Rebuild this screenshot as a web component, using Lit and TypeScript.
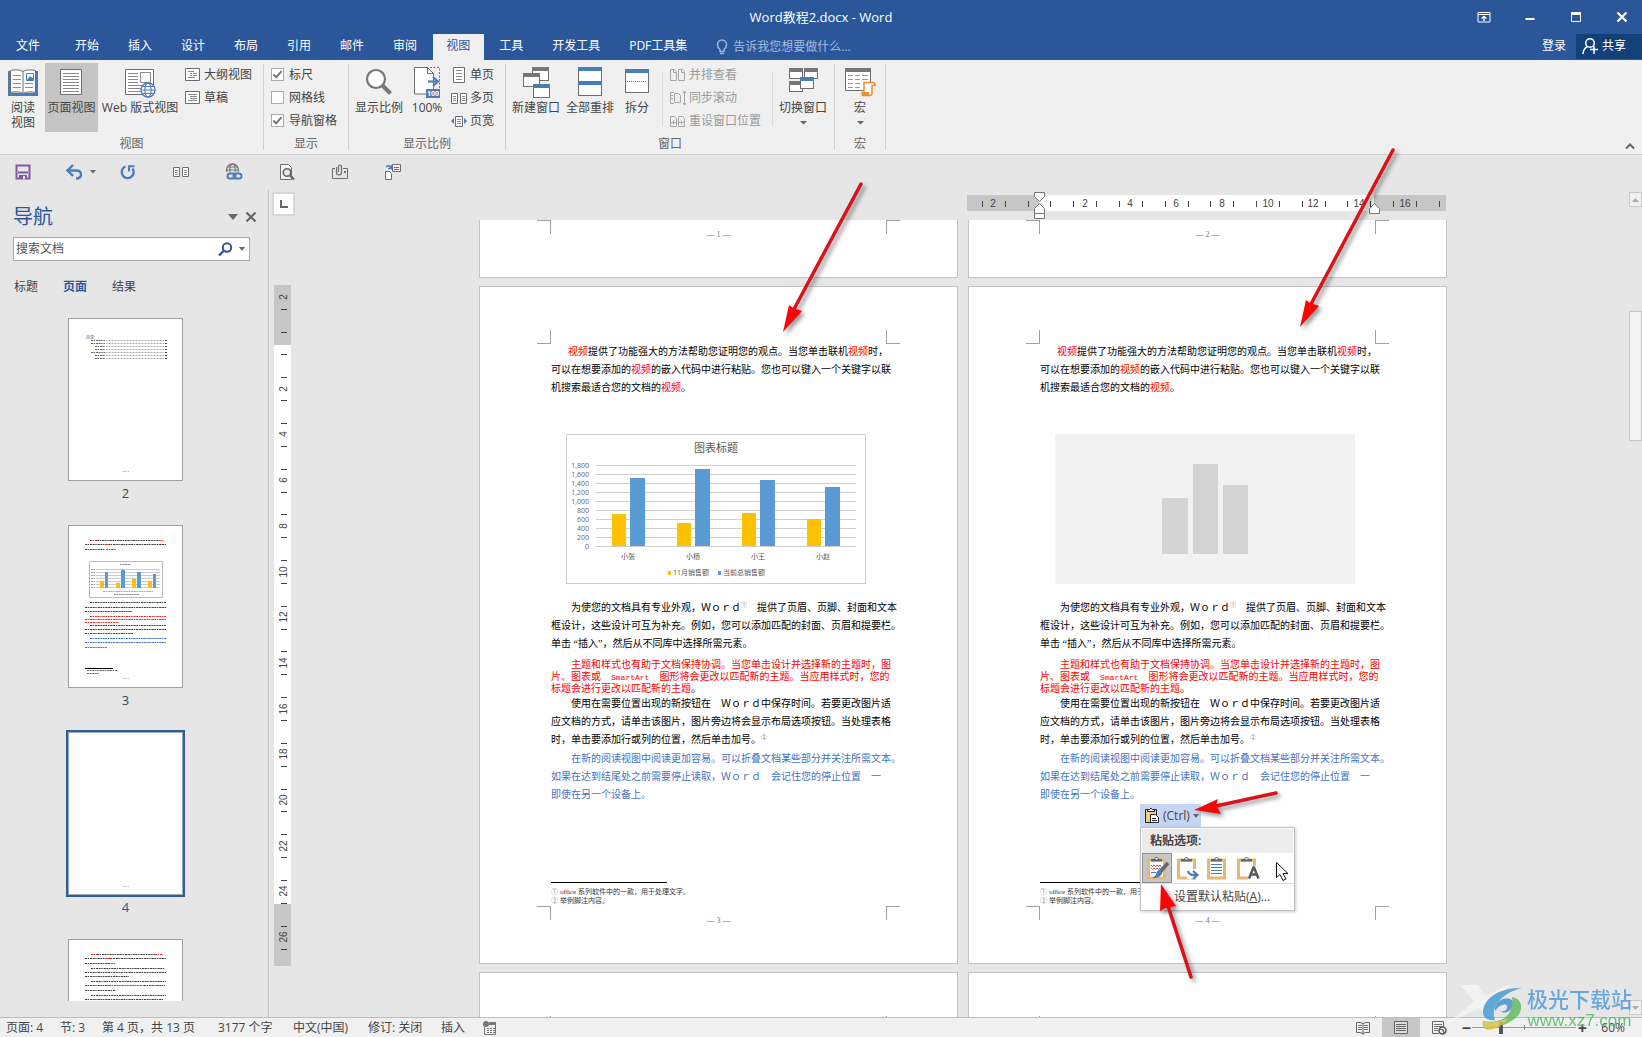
import { LitElement, html, svg, css, nothing } from "lit";
import { customElement, property } from "lit/decorators.js";
import { classMap } from "lit/directives/class-map.js";

const UI_FONT = css`"Open Sans", "Noto Sans CJK SC", sans-serif`;
const G = "#6d6d6d";
const B = "#4a7db8";

/* ---------- icons ---------- */
const icon = (w: number, h: number, body: unknown) =>
  html`<svg width=${w} height=${h} viewBox="0 0 ${w} ${h}" fill="none" aria-hidden="true">${body}</svg>`;

const rows = (x1: number, x2: number, ys: number[], c = "#8a8a8a") =>
  ys.map((y) => svg`<path d="M${x1} ${y}.5H${x2}" stroke=${c}/>`);

const globe = (cx: number, cy: number, r: number, c = B, bg = "#f0f0f0") => svg`
  <circle cx=${cx} cy=${cy} r=${r} fill=${bg} stroke=${c} stroke-width="1.3"/>
  <ellipse cx=${cx} cy=${cy} rx=${r * 0.45} ry=${r} stroke=${c} stroke-width="1.1"/>
  <path d="M${cx - r} ${cy}h${2 * r}M${cx - r * 0.85} ${cy - r * 0.5}h${1.7 * r}M${cx - r * 0.85} ${cy + r * 0.5}h${1.7 * r}" stroke=${c}/>`;

const win = (x: number, y: number, w: number, h: number, c: string) => svg`
  <rect x=${x + 0.5} y=${y + 0.5} width=${w - 1} height=${h - 1} fill="#fff" stroke=${G}/>
  <rect x=${x} y=${y} width=${w} height="4" fill=${c}/>`;

const icons = {
  read: icon(32, 32, svg`
    <path d="M1 4h3v22h11l1 1 1-1h11V4h3v25H1z" fill=${B}/>
    <path d="M3.500 3.500c4-1 10-1 12.500 1c2.500-2 8.500-2 12.500-1v22c-4-1-10-1-12.500 1c-2.500-2-8.500-2-12.500-1z" fill="#fff" stroke=${G}/>
    <path d="M16 4.500v22" stroke=${G}/>
    ${rows(6, 14, [8, 12, 16, 20])}${rows(18, 26, [16, 20])}
    <path d="M19.500 6.500h7v7h-7z" fill="#fff" stroke=${B}/><path d="M20 13l3-4 2 2 1.500-1v3z" fill=${B}/>`),
  print: icon(32, 32, svg`
    <path d="M4.500 2.500h21v25h-21z" fill="#fff" stroke=${G}/>${rows(7, 23, [6, 9, 12, 15, 18, 21, 24])}`),
  web: icon(32, 32, svg`
    <path d="M1.500 2.500h28v25h-28z" fill="#fff" stroke=${G}/>
    ${rows(4, 14, [6, 9, 12, 15])}${rows(4, 20, [18, 21, 24])}
    <path d="M16.500 5.500h10v10h-10z" stroke="#8a8a8a"/>${globe(24, 23, 7, B, "#fff")}`),
  outline: icon(16, 16, svg`
    <path d="M.5 1.500h14v12h-14z" fill="#fff" stroke=${G}/><path d="M3 4.500h6M5 6.500h2M8 6.500h4M5 8.500h2M8 8.500h4M3 10.500h7" stroke="#888"/>`),
  draft: icon(16, 16, svg`
    <path d="M.5 1.500h14v12h-14z" fill="#fff" stroke=${G}/><path d="M3 4.500h9M5 6.500h7M5 8.500h7M3 10.500h9" stroke="#888"/>`),
  zoom: icon(32, 32, svg`
    <circle cx="13" cy="12" r="9" fill="#fff" stroke="#777" stroke-width="2.200"/><path d="M19.500 18.500l8 8" stroke="#777" stroke-width="4"/>`),
  hundred: icon(32, 32, svg`
    <path d="M3.500.5h13l6 6v20.500h-19z" fill="#fff" stroke=${G}/><path d="M16.500.5v6h6" stroke=${G}/>
    <path d="M19 .5h9.500v21" stroke="#777" stroke-dasharray="2 1.500"/>
    <path d="M17 14.500h9" stroke=${B} stroke-width="2.200"/><path d="M22 10l5 4.500-5 4.500" stroke=${B} stroke-width="2.200"/>
    <rect x="15" y="22" width="14" height="9" fill=${B}/>
    <text x="22" y="29" font-size="7" font-weight="700" fill="#fff" text-anchor="middle">100</text>`),
  onePage: icon(16, 18, svg`
    <path d="M2.500 1.500h11v15h-11z" fill="#fff" stroke=${G}/>${rows(5, 11, [4, 7, 10, 13])}`),
  multi: icon(16, 18, svg`
    <path d="M.5 4.500h6v10h-6zM9.500 4.500h6v10h-6z" fill="#fff" stroke=${G}/>${rows(2, 5, [7, 9, 11])}${rows(11, 14, [7, 9, 11])}`),
  pageWidth: icon(16, 18, svg`
    <path d="M4.500 4.500h7v10h-7z" fill="#fff" stroke=${G}/>${rows(6, 10, [7, 9, 11])}<path d="M3 6v6l-3-3zM13 6v6l3-3z" fill=${B}/>`),
  newWin: icon(32, 32, svg`${win(12, 0, 17, 14, "#777")}${win(3, 6, 17, 14, "#777")}${win(13, 17, 17, 14, B)}`),
  arrange: icon(32, 32, svg`${win(4, 0, 24, 15, B)}${win(4, 14, 24, 15, B)}`),
  split: icon(32, 32, svg`${win(4, 2, 24, 24, B)}<path d="M6 14.500h20" stroke=${B} stroke-dasharray="1 1"/>`),
  side: icon(17, 16, svg`<path d="M1.500 2.500h4l2 2v9h-6zM9.500 2.500h4l2 2v9h-6z" stroke="#a6a6a6"/><path d="M4.500 2.500v3h3M12.500 2.500v3h3" stroke="#a6a6a6"/>`),
  sync: icon(17, 16, svg`<path d="M5 2.500H1.500v11H5M5.500 3.500h4l2 2v7h-6z" stroke="#a6a6a6"/><path d="M15.500 1v14M14 3l1.500-2 1.500 2M14 13l1.500 2 1.500-2" stroke="#a6a6a6"/><path d="M2 5.500h2M2 8.500h2" stroke="#a6a6a6"/>`),
  reset: icon(17, 16, svg`<path d="M1.500 3.500h4l2 2v8h-6zM9.500 3.500h4l2 2v8h-6z" stroke="#a6a6a6"/><path d="M2 9.500h5M10 9.500h5M4.500 7.500v4M12.500 7.500v4" stroke="#a6a6a6"/>`),
  switchWin: icon(32, 32, svg`${win(2, 1, 14, 11, "#777")}${win(17, 1, 14, 11, "#777")}${win(2, 14, 14, 11, "#777")}${win(13, 10, 14, 12, B)}`),
  macro: icon(32, 32, svg`
    <path d="M1.500 2.500h25v21h-25z" fill="#fff" stroke=${G}/><rect x="1" y="1" width="26" height="4" fill="#777"/>
    <path d="M4 8.500h5M11 8.500h5M18 8.500h6M4 12.500h5M11 12.500h5M18 12.500h6M4 16.500h5M11 16.500h5M4 20.500h5M11 20.500h5" stroke="#999"/>
    <path d="M20 15.500h9q2 0 2 3h-3v8q0 2-2 2h-8q2-1 2-3z" fill="#fff" stroke="#ed8b33" stroke-width="1.500"/><path d="M17 25h8v3h-7z" fill="#ed8b33"/>`),
  save: icon(18, 16, svg`<g transform="translate(2 0)"><path d="M1.500 1.500h13v13h-13z" stroke="#8456a3" stroke-width="2"/><path d="M3 8.500h10" stroke="#8456a3" stroke-width="2"/><path d="M4 11h8v4H4z" fill="#8456a3"/><path d="M8 12h2v3H8z" fill="#e6e6e6"/></g>`),
  undo: icon(18, 16, svg`<path d="M2 6.500h8q5 0 5 4t-5 4" stroke=${B} stroke-width="2.400"/><path d="M7 1L1.500 6.500 7 12" stroke=${B} stroke-width="2.400"/>`),
  redo: icon(18, 16, svg`<path d="M6.500 2.500A6 6 0 1 0 13.500 4.500" stroke=${B} stroke-width="2.400"/><path d="M10 7.500V2.200H15.500" stroke=${B} stroke-width="2"/>`),
  pages2: icon(18, 16, svg`<path d="M1.500 3.500h6v9h-6zM10.500 3.500h6v9h-6z" fill="#fff" stroke=${G}/>${rows(3, 6, [6, 8, 10])}${rows(12, 15, [6, 8, 10])}`),
  link: icon(18, 18, svg`${globe(7.500, 7, 6, "#777", "#e6e6e6")}<rect x="1" y="9" width="16" height="8" fill="#e6e6e6"/><rect x="2.500" y="10.500" width="8" height="5" rx="2.500" stroke=${B} stroke-width="2"/><rect x="8.500" y="10.500" width="8" height="5" rx="2.500" stroke=${B} stroke-width="2"/>`),
  preview: icon(18, 18, svg`<path d="M2.500 1.500h8l3 3v12h-11z" fill="#f5f5f5" stroke=${G}/><circle cx="9" cy="9.500" r="3.800" fill="#e6e6e6" stroke="#666" stroke-width="1.600"/><path d="M12 12.500l4 4" stroke="#666" stroke-width="2.400"/>`),
  attach: icon(18, 16, svg`<path d="M4 4.500H1.500v10h15v-10H12" stroke=${G}/><path d="M5.500 3v5q0 3 2.500 3t2.500-3V2.500Q10.500 1 9 1T7.500 2.500V8" stroke=${G} stroke-width="1.200"/><path d="M13 7h2v2h-2z" fill=${G}/>`),
  swap: icon(18, 18, svg`<path d="M8.500 1.500h8v7h-8z" fill="#f5f5f5" stroke=${G}/><path d="M10 4.500h5M10 6.500h5" stroke=${G}/><path d="M1.500 8.500h4l2 2v6h-6z" fill="#fff" stroke=${G}/><path d="M2 4q3-3 5 1M7.500 2v3.500H4" stroke=${B} stroke-width="1.400"/>`),
  bulb: icon(12, 16, svg`<path d="M4 10.500Q1.500 8.500 1.500 5.500a4.500 4.500 0 0 1 9 0Q10.500 8.500 8 10.500v2H4z" stroke="#9db6dd" stroke-width="1.500"/><path d="M4 14.500h4" stroke="#9db6dd" stroke-width="1.500"/>`),
  user: icon(16, 18, svg`<circle cx="8" cy="6" r="4.300" stroke="#fff" stroke-width="1.500"/><path d="M1 17q0-5 4.500-7.500M8 12.500h8M12 9v8" stroke="#fff" stroke-width="1.500"/>`),
  rib: icon(14, 12, svg`<path d="M1 1.500h12v9.500H1zM1 3.500h12" stroke="#fff"/><path d="M7 10V5.500M4.500 7.500L7 5.500l2.500 2" stroke="#fff" stroke-width="1.400"/>`),
  min: icon(12, 12, svg`<path d="M1.500 8h9" stroke="#fff" stroke-width="2"/>`),
  max: icon(12, 12, svg`<path d="M1.500 1.500h9v9h-9z" stroke="#fff"/><path d="M1 2.500h10" stroke="#fff" stroke-width="3"/>`),
  close: icon(12, 12, svg`<path d="M1.500 1.500l9 9M10.500 1.500l-9 9" stroke="#fff" stroke-width="2.200"/>`),
  caret: icon(7, 4, svg`<path d="M0 0h6L3 4z" fill="#666"/>`),
  up: icon(12, 8, svg`<path d="M2 6.500l4-4 4 4" stroke="#666" stroke-width="2"/>`),
  navCaret: icon(10, 6, svg`<path d="M0 0h10L5 6z" fill="#666"/>`),
  navClose: icon(12, 12, svg`<path d="M1.500 1.500l9 9M10.500 1.500l-9 9" stroke="#666" stroke-width="2.200"/>`),
  search: icon(15, 14, svg`<circle cx="9" cy="5.500" r="4.200" stroke="#2f5597" stroke-width="2"/><path d="M6 8.500l-5 5" stroke="#2f5597" stroke-width="2.400"/>`),
  macroRec: icon(15, 14, svg`<path d="M1.500 5v8.500h11V3" stroke="#777"/><path d="M6 1h7v3H6z" fill="#777"/><circle cx="3" cy="3" r="3" fill="#777"/><path d="M4 7.500h2M7 7.500h2M10 7.500h2M4 9.500h2M7 9.500h2M10 9.500h2M4 11.500h2M7 11.500h2M10 11.500h2" stroke="#777"/>`),
  viewRead: icon(14, 14, svg`<path d="M.5 1.500q4-.5 6.500 1 2.500-1.500 6.500-1v10q-4-.5-6.500 1-2.500-1.500-6.500-1zM7 2.500v11" stroke="#666"/><path d="M2 4.500h4M2 6.500h4M2 8.500h4M8 4.500h4M8 6.500h4M8 8.500h4" stroke="#777"/>`),
  viewPrint: icon(14, 14, svg`<path d="M.5.5h13v12H.5z" fill="#ddd" stroke="#666"/>${rows(2, 12, [3, 5, 7, 9], "#666")}`),
  viewWeb: icon(15, 14, svg`<path d="M7 12.500H.5V.5h11V6" stroke="#666"/>${rows(2, 10, [3, 5], "#777")}${rows(2, 6, [7, 9], "#777")}<circle cx="10.500" cy="9.500" r="3.500" fill="#f0f0f0" stroke="#555" stroke-width="1.500"/><path d="M8 8l3 1 1 3" stroke="#555" stroke-width="1.300"/>`),
  clip: icon(16, 17, svg`<path d="M1.500 2.500h11v13h-11z" fill="#f0d080" stroke="#222"/><path d="M3.500 4.500v-2h2q1.500-3 3 0h2v2z" fill="#fff" stroke="#222"/><path d="M6.500 7.500h5l3 3v5h-8z" fill="#fff" stroke="#222"/><path d="M8 11.500h4M8 13.500h5" stroke="#222"/>`),
};

const board = (extra: unknown) => icon(26, 24, svg`<g transform="translate(2 0)">
  <path d="M2.500 4h16v18h-16z" fill="#fff" stroke="#e6b877" stroke-width="3"/>
  <path d="M5 5.500V3h3q2.500-4 5 0h3v2.500z" fill="#666"/><rect x="9.500" y="2" width="2" height="1.500" fill="#fff"/>${extra}</g>`);

const pasteIcons = [
  board(svg`<path d="M5 9l1.500 1.500L8 9l1.500 1.500L11 9l1.500 1.500L14 9l1.500 1.500M5 12l1.500 1.500L8 12l1.500 1.500L11 12l1.500 1.500L14 12" stroke="#d0444c"/><path d="M5 16.500h5" stroke=${B}/><path d="M22 7l-8 9" stroke="#666" stroke-width="3.500"/><path d="M14 14l2.500 3q-3 6-10.500 5q4-2 4-4 1-4 4-4z" fill=${B}/>`),
  board(svg`<path d="M11 13h11v10H11z" fill="#fff"/><path d="M12 15q1 5 9 4M17 15l4.500 4-4.500 4" stroke=${B} stroke-width="2.200"/>`),
  board(rows(5, 16, [8, 11, 14, 17], B)),
  board(svg`<path d="M12 10h10v14H12z" fill="#fff"/><path d="M13 22.500l4.500-11h.5l4.500 11M14.500 18.500h6.500" stroke="#555" stroke-width="2.400"/>`),
];

/* ---------- data ---------- */
const TABS = ["文件", "开始", "插入", "设计", "布局", "引用", "邮件", "审阅", "视图", "工具", "开发工具", "PDF工具集"];

const CHART = [
  { name: "小张", a: 700, b: 1500 },
  { name: "小杨", a: 500, b: 1700 },
  { name: "小王", a: 740, b: 1460 },
  { name: "小赵", a: 600, b: 1300 },
];
const AXIS = ["1,800", "1,600", "1,400", "1,200", "1,000", "800", "600", "400", "200", "0"];

const CELL = 45.7;

/* ---------- rulers ---------- */
@customElement("h-ruler")
class HRuler extends LitElement {
  static styles = css`
    :host { display: block; height: 30px; }
    svg { display: block; overflow: visible; font: 10px "Liberation Sans", sans-serif; }
  `;
  render() {
    const x0 = 71;
    const labels = [-1, 1, 2, 3, 4, 5, 6, 7, 8];
    const ticks = Array.from({ length: 21 }, (_, i) => Math.round(x0 + CELL * (i / 2 - 1.25))).filter((x) => x < 476);
    return html`<svg width="479" height="30" role="img" aria-label="水平标尺">
      <rect x="-1" y="5" width="479" height="16" fill="#c6c6c6"/>
      <rect x="71" y="5" width="335" height="16" fill="#fff"/>
      ${ticks.map((x) => svg`<path d="M${x}.5 11v6" stroke="#444"/>`)}
      ${labels.map((n) => svg`<text x=${Math.round(x0 + n * CELL)} y="17" fill="#444" text-anchor="middle">${Math.abs(n * 2)}</text>`)}
      <g fill="#fff" stroke="#777">
        <path d="M66.500 2.500h10v4l-5 5-5-5zM66.500 23.500v-5l5-5 5 5v5zM66.500 23.500h10v5h-10z"/>
        <path d="M401.500 23.500v-5l5-5 5 5v5z"/>
      </g>
    </svg>`;
  }
}

@customElement("v-ruler")
class VRuler extends LitElement {
  static styles = css`
    :host { display: flex; flex-direction: column; align-items: flex-start; width: 31px; flex: none; padding: 2px 0 0 3px; box-sizing: border-box; overflow: hidden; }
    .tabstop { width: 23px; height: 24px; box-sizing: border-box; border: 2px solid #d8d8d8; background: #fff; padding: 0; display: grid; place-items: center; }
    svg { display: block; font: 10px "Liberation Sans", sans-serif; }
    .scale { margin: 69px 0 0 2px; }
  `;
  render() {
    const y0 = 58;
    const ticks = Array.from({ length: 30 }, (_, i) => Math.round(y0 + CELL * (i / 2 - 0.75))).filter((y) => y > 20 && y < 668);
    return html`
      <button class="tabstop" aria-label="制表位">${icon(8, 8, svg`<path d="M1 0v7H8" stroke="#666" stroke-width="2"/>`)}</button>
      <svg class="scale" width="17" height="681" role="img" aria-label="垂直标尺">
        <rect width="17" height="681" fill="#c6c6c6"/>
        <rect y="60" width="17" height="559" fill="#fff"/>
        ${ticks.map((y) => svg`<path d="M7 ${y}.5h6" stroke="#444"/>`)}
        ${[-1, 1, 2, 3, 4, 5, 6, 7, 8, 9, 10, 11, 12, 13].map((n) => {
          const y = Math.round(y0 + n * CELL);
          return svg`<text x="13" y=${y} transform="rotate(-90 13 ${y})" fill="#444" text-anchor="middle">${Math.abs(n * 2)}</text>`;
        })}
      </svg>`;
  }
}

/* ---------- chart ---------- */
@customElement("sales-chart")
class SalesChart extends LitElement {
  @property({ type: Boolean }) placeholder = false;
  static styles = css`
    :host { display: block; }
    svg { display: block; font: 7px "Open Sans", "Noto Sans CJK SC", sans-serif; }
  `;
  render() {
    if (this.placeholder) {
      return html`<svg width="300" height="150" role="img" aria-label="图表">
        <rect width="300" height="150" fill="#f2f2f2"/>
        <path d="M107 64h26v56h-26zM138 30h25v90h-25zM168 51h25v69h-25z" fill="#d4d4d4"/>
      </svg>`;
    }
    const h = (v: number) => Math.round(v * 0.045);
    return html`<svg width="300" height="150" role="img" aria-label="图表标题">
      <rect x=".5" y=".5" width="299" height="149" fill="#fff" stroke="#d0d0d0"/>
      <text x="150" y="18" font-size="11" fill="#595959" text-anchor="middle">图表标题</text>
      ${AXIS.map((t, i) => svg`<path d="M30 ${31 + i * 9}.5h260" stroke="#d0d0d0"/>
        <text x="23" y=${34 + i * 9} fill="#666" text-anchor="end">${t}</text>`)}
      ${CHART.map((d, i) => svg`
        <rect x=${46 + i * 65} y=${112 - h(d.a)} width="14" height=${h(d.a)} fill="#ffc000"/>
        <rect x=${64 + i * 65} y=${112 - h(d.b)} width="15" height=${h(d.b)} fill="#5b9bd5"/>
        <text x=${62 + i * 65} y="125" fill="#555" text-anchor="middle">${d.name}</text>`)}
      <rect x="102" y="137" width="3" height="4" fill="#ffc000"/><text x="107" y="141" fill="#555">11月销售额</text>
      <rect x="152" y="137" width="3" height="4" fill="#5b9bd5"/><text x="157" y="141" fill="#555">当前总销售额</text>
    </svg>`;
  }
}

/* ---------- paper ---------- */
@customElement("doc-sheet")
class DocSheet extends LitElement {
  @property() extent: "full" | "head" | "foot" = "full";
  @property() no = "";
  @property({ type: Boolean }) placeholder = false;
  static styles = css`
    :host { display: flex; flex-direction: column; background: #fff; border: 1px solid #c3c3c3; box-sizing: border-box; position: relative; }
    :host([extent="foot"]) { border-top: 0; }
    :host([extent="head"]) { border-bottom: 0; }
    .edge { display: grid; grid-template-columns: 71px 1fr 71px; height: 57px; flex: none; }
    .mark { width: 13px; height: 13px; border: 0 solid #a0a0a0; }
    .tl { align-self: end; justify-self: end; border-width: 0 1px 1px 0; }
    .tr { align-self: end; justify-self: start; border-width: 0 0 1px 1px; grid-column: 3; }
    .bl { justify-self: end; border-width: 1px 1px 0 0; }
    .br { justify-self: start; border-width: 1px 0 0 1px; }
    .no { padding-top: 8px; text-align: center; font: 8px/14px "Liberation Serif", serif; color: #777; }
    .body { flex: 1; display: flex; flex-direction: column; margin-top: -2px; padding: 0 71px; font: 10px/18px "Noto Sans CJK SC", sans-serif; color: #000; white-space: nowrap; }
    p { margin: 0; text-indent: 2em; }
    .first { text-indent: 17px; }
    .tight { line-height: 12px; margin-top: 6px; color: #f00; }
    .blue { color: #4472c4; margin-top: 1px; }
    .red { color: #f00; }
    .dark { color: #000; }
    .chart { margin: 38px 0 14px 15px; }
    .mono { font-family: "Liberation Mono", monospace; font-size: 8px; line-height: 0; }
    .fw { font-family: "Liberation Serif", "Noto Sans CJK SC", serif; line-height: 0; }
    sup { font-size: 6px; line-height: 0; vertical-align: 4px; color: #777; }
    .notes { margin-top: auto; width: max-content; font: 7px/9px "Liberation Serif", "Noto Sans CJK SC", serif; color: #333; }
    .rule { width: 116px; border-top: 1px solid #000; margin-bottom: 5px; }
    .notes div span { color: #888; padding-right: 2px; }
  `;
  render() {
    return html`
      ${this.extent === "foot" ? nothing : html`<div class="edge"><i class="mark tl"></i><i class="mark tr"></i></div>`}
      ${this.extent !== "full" ? nothing : html`<div class="body">
        <p class="first"><span class="red">视频</span>提供了功能强大的方法帮助您证明您的观点。当您单击联机<span class="red">视频</span>时，<br>可以在想要添加的<span class="red">视频</span>的嵌入代码中进行粘贴。您也可以键入一个关键字以联<br>机搜索最适合您的文档的<span class="red">视频</span>。</p>
        <sales-chart class="chart" ?placeholder=${this.placeholder}></sales-chart>
        <p>为使您的文档具有专业外观，<span class="fw">Ｗｏｒｄ</span><sup>①</sup>　提供了页眉、页脚、封面和文本<br>框设计，这些设计可互为补充。例如，您可以添加匹配的封面、页眉和提要栏。<br>单击<span class="fw"> “</span>插入<span class="fw">”</span>，然后从不同库中选择所需元素。</p>
        <p class="tight">主题和样式也有助于文档保持协调。当您单击设计并选择新的主题时，图<br>片、图表或　<span class="mono">SmartArt</span>　图形将会更改以匹配新的主题。当应用样式时，您的<br>标题会进行更改以匹配新的主题<span class="dark">。</span></p>
        <p>使用在需要位置出现的新按钮在　<span class="fw">Ｗｏｒｄ</span>中保存时间。若要更改图片适<br>应文档的方式，请单击该图片，图片旁边将会显示布局选项按钮。当处理表格<br>时，单击要添加行或列的位置，然后单击加号。<sup>②</sup></p>
        <p class="blue">在新的阅读视图中阅读更加容易。可以折叠文档某些部分并关注所需文本。<br>如果在达到结尾处之前需要停止读取，<span class="fw">Ｗｏｒｄ</span>　会记住您的停止位置　一<br>即使在另一个设备上。</p>
        <div class="notes"><div class="rule"></div><div><span>①</span>office 系列软件中的一款，用于处理文字。</div><div><span>②</span>举例脚注内容。</div></div>
      </div>`}
      ${this.extent === "head" ? nothing : html`<div class="edge"><i class="mark bl"></i><div class="no">— ${this.no} —</div><i class="mark br"></i></div>`}
      <slot></slot>`;
  }
}

/* ---------- paste options ---------- */
@customElement("paste-menu")
class PasteMenu extends LitElement {
  static styles = css`
    :host { display: block; width: 155px; font: 12px/16px ${UI_FONT}; color: #444; }
    button { font: inherit; color: inherit; border: 0; padding: 0; background: none; }
    .trigger { display: flex; align-items: center; gap: 3px; width: 61px; height: 23px; padding-left: 4px; background: #c5d5f3; }
    .menu { background: #fff; border: 1px solid #c0c0c0; box-shadow: 1px 1px 3px #0003; }
    .head { margin: 1px 1px 0; padding: 4px 8px; background: #ececec; font-weight: 600; }
    .opts { display: flex; padding-left: 1px; border-bottom: 1px solid #ddd; }
    .opts button { width: 30px; height: 30px; display: grid; place-items: center; box-sizing: border-box; }
    .opts .on { background: #c6c6c6; border: 1px solid #8f8f8f; }
    .default { display: block; padding: 5px 0 5px 33px; white-space: nowrap; }
  `;
  render() {
    return html`
      <button class="trigger">${icons.clip}<span>(Ctrl)</span>${icons.caret}</button>
      <div class="menu">
        <div class="head">粘贴选项:</div>
        <div class="opts">${pasteIcons.map((p, i) => html`<button class=${classMap({ on: i === 0 })} aria-label=${["保留源格式", "合并格式", "使用目标主题", "只保留文本"][i]}>${p}</button>`)}</div>
        <button class="default">设置默认粘贴(<u>A</u>)...</button>
      </div>`;
  }
}

/* ---------- navigation pane ---------- */
const dash = (x: number, x2: number, y: number, c = "#444") =>
  svg`<path d="M${x} ${y}.5H${x2}" stroke=${c} stroke-dasharray="2 .6 1.400 .8 2.400 .5"/>`;
const RED = "#e83030";

const thumbs: Record<string, unknown> = {
  "2": svg`<text x="17" y="20" font-size="4" fill="#2b579a">目录</text>
    ${[0, 1, 2, 3, 4, 5, 6].map((i) => svg`${dash([22, 22, 26, 26, 22, 26, 26][i], 36, 21 + i * 3, "#666")}<path d="M37 ${21 + i * 3}.5H95" stroke="#aaa" stroke-dasharray="1 .5"/>${dash(96, 98, 21 + i * 3)}`)}
    ${dash(54, 60, 152, "#bbb")}`,
  "3": svg`${dash(21, 28, 14, RED)}${dash(28, 90, 14)}${dash(90, 95, 14, RED)}${dash(16, 97, 18)}${dash(36, 40, 18, RED)}${dash(16, 36, 23)}${dash(37, 47, 23, RED)}
    <path d="M20.500 35.500h73v36h-73z" stroke="#bbb"/>${dash(51, 62, 38, "#888")}
    ${[43, 46, 49, 52, 55, 58, 61].map((y) => svg`<path d="M27 ${y}.5h64" stroke="#ccc"/>${dash(22, 26, y, "#999")}`)}
    <path d="M31 55h4v7h-4zM47 57h4v5h-4zM63 53h4v9h-4zM79 55h4v7h-4z" fill="#ffc000"/>
    <path d="M36 46h3v16h-3zM52 44h4v18h-4zM68 46h4v16h-4zM84 48h3v14h-3z" fill="#5b9bd5"/>
    ${dash(34, 84, 65, "#aaa")}${dash(45, 70, 68, "#888")}
    ${dash(21, 97, 76)}${dash(16, 98, 81)}${dash(16, 63, 85)}
    ${dash(21, 97, 90, RED)}${dash(16, 97, 93, RED)}${dash(16, 50, 96, RED)}
    ${dash(21, 97, 99)}${dash(16, 97, 103)}${dash(16, 64, 107)}
    ${dash(21, 98, 112, "#4472c4")}${dash(16, 97, 116, "#4472c4")}${dash(16, 38, 121, "#4472c4")}
    <path d="M16 142.500h28" stroke="#000"/>${dash(18, 49, 144, "#666")}${dash(18, 30, 147, "#666")}${dash(54, 60, 152, "#bbb")}`,
  "4": dash(54, 60, 153, "#bbb"),
  "5": svg`${dash(22, 28, 14, RED)}${dash(28, 86, 14)}${dash(86, 94, 14, RED)}${dash(16, 97, 18)}${dash(36, 42, 18, RED)}${dash(16, 42, 23)}${dash(42, 47, 23, RED)}
    ${dash(22, 96, 28)}${dash(16, 97, 32)}${dash(16, 60, 36)}${dash(22, 97, 41)}${dash(16, 40, 45)}${dash(40, 75, 45, RED)}${dash(75, 96, 45)}${dash(16, 47, 50)}${dash(22, 97, 55)}${dash(16, 94, 59)}`,
};

@customElement("nav-pane")
class NavPane extends LitElement {
  static styles = css`
    :host { display: flex; flex-direction: column; width: 269px; flex: none; box-sizing: border-box; padding: 13px 0 16px 13px; border-right: 1px solid #c0c0c0; font: 12px/20px ${UI_FONT}; color: #444; }
    button, input { font: inherit; color: inherit; border: 0; padding: 0; background: none; }
    header { display: flex; align-items: center; height: 27px; gap: 7px; padding-right: 11px; }
    h2 { margin: 0; flex: 1; font-size: 20px; line-height: 28px; font-weight: 400; color: #2b579a; }
    svg { display: block; }
    .search { display: flex; align-items: center; gap: 6px; margin: 7px 18px 0 0; height: 22px; padding: 0 3px 0 2px; background: #fff; border: 1px solid #ababab; }
    .search input { flex: 1; min-width: 0; outline: 0; }
    .search input::placeholder { color: #555; opacity: 1; }
    nav { display: flex; gap: 25px; margin: 16px 0 19px 1px; }
    .on { font-weight: 700; color: #2b579a; }
    .list { flex: 1; min-height: 0; overflow: hidden; display: flex; flex-direction: column; align-items: center; padding: 2px 30px 0 0; }
    .thumb { flex: none; display: flex; flex-direction: column; align-items: center; height: 207px; font-size: 13px; }
    .paper { width: 113px; height: 161px; background: #fff; border: 1px solid #a0a0a0; margin-bottom: 2px; }
    .sel .paper { border-color: #9ab; box-shadow: 0 0 0 2px #2f5f94; }
    .sel { color: #2b579a; }
  `;
  render() {
    return html`
      <header><h2>导航</h2><button aria-label="任务窗格选项">${icons.navCaret}</button><button aria-label="关闭">${icons.navClose}</button></header>
      <div class="search"><input type="text" placeholder="搜索文档" aria-label="搜索文档"><button aria-label="搜索">${icons.search}</button><button aria-label="搜索选项">${icons.caret}</button></div>
      <nav><button>标题</button><button class="on">页面</button><button>结果</button></nav>
      <div class="list">${["2", "3", "4", "5"].map((n) => html`
        <button class=${classMap({ thumb: true, sel: n === "4" })} aria-label="第 ${n} 页">
          <div class="paper"><svg width="113" height="161" fill="none">${thumbs[n]}</svg></div>${n === "5" ? nothing : n}
        </button>`)}</div>`;
  }
}

/* ---------- ribbon ---------- */
@customElement("ribbon-bar")
class RibbonBar extends LitElement {
  static styles = css`
    :host { display: flex; height: 94px; background: #f0f0f0; border-bottom: 1px solid #d0d0d0; font: 12px/15px ${UI_FONT}; color: #444; }
    button { font: inherit; color: inherit; border: 0; padding: 0; background: none; white-space: nowrap; }
    svg { display: block; }
    .group { display: flex; flex-direction: column; border-right: 1px solid #cfcfcf; margin: 4px 0; height: 86px; }
    .row { display: flex; height: 71px; margin-top: -1px; }
    .label { text-align: center; line-height: 18px; margin-top: 3px; color: #666; }
    .big { width: 54px; height: 69px; padding-top: 4px; display: flex; flex-direction: column; align-items: center; justify-content: flex-start; gap: 1px; }
    .w40 { width: 40px; } .w42 { width: 42px; } .w50 { width: 50px; } .w53 { width: 53px; } .w84 { width: 84px; }
    .w45 { width: 45px; padding-left: 1px; }
    .on { background: #c5c5c5; }
    .col { display: flex; flex-direction: column; }
    .small { display: flex; align-items: center; gap: 3px; height: 23px; }
    .off { color: #9a9a9a; }
    .drop { padding-top: 6px; display: grid; justify-items: center; }
    .vsep { width: 1px; margin: 9px 0 6px; background: #dcdcdc; }
    .g1 .row { padding-right: 11px; } .g1 .col { margin-left: 3px; }
    .g2 .row { padding: 0 11px 0 7px; } .g2 .small { gap: 5px; }
    .g3 .row { padding: 0 11px 0 3px; } .g3 .col { margin-left: 3px; }
    .g4 .row { padding: 0 4px 0 3px; } .g4 .col { margin: 0 11px 0 6px; } .g4 .vsep:first-of-type { margin-left: 5px; } .g4 .vsep + .big { margin-left: 3px; }
    input { appearance: none; width: 13px; height: 13px; margin: 0; border: 1px solid #ababab; background: #fff; display: grid; place-items: center; }
    input:checked::after { content: ""; width: 3px; height: 7px; border: solid #777; border-width: 0 2px 2px 0; transform: translateY(-1px) rotate(42deg); }
    .fold { margin: auto 6px 4px auto; }
  `;
  private big(ic: unknown, text: unknown, cls = "", drop = false) {
    return html`<button class="big ${cls}">${ic}<span>${text}${drop ? html`<span class="drop">${icon(7, 4, svg`<path d="M0 0h7L3.500 3.500z" fill="#666"/>`)}</span>` : nothing}</span></button>`;
  }
  private small(ic: unknown, text: string, off = false) {
    return html`<button class="small ${off ? "off" : ""}" ?disabled=${off}>${ic}<span>${text}</span></button>`;
  }
  private check(text: string, on: boolean) {
    return html`<label class="small"><input type="checkbox" ?checked=${on}>${text}</label>`;
  }
  render() {
    return html`
      <div class="group g1"><div class="row">
        ${this.big(icons.read, html`阅读<br>视图`, "w45")}${this.big(icons.print, "页面视图", "w53 on")}${this.big(icons.web, "Web 版式视图", "w84")}
        <div class="col">${this.small(icons.outline, "大纲视图")}${this.small(icons.draft, "草稿")}</div>
      </div><div class="label">视图</div></div>
      <div class="group g2"><div class="row"><div class="col">${this.check("标尺", true)}${this.check("网格线", false)}${this.check("导航窗格", true)}</div></div><div class="label">显示</div></div>
      <div class="group g3"><div class="row">
        ${this.big(icons.zoom, "显示比例")}${this.big(icons.hundred, "100%", "w42")}
        <div class="col">${this.small(icons.onePage, "单页")}${this.small(icons.multi, "多页")}${this.small(icons.pageWidth, "页宽")}</div>
      </div><div class="label">显示比例</div></div>
      <div class="group g4"><div class="row">
        ${this.big(icons.newWin, "新建窗口")}${this.big(icons.arrange, "全部重排")}${this.big(icons.split, "拆分", "w40")}
        <div class="vsep"></div>
        <div class="col">${this.small(icons.side, "并排查看", true)}${this.small(icons.sync, "同步滚动", true)}${this.small(icons.reset, "重设窗口位置", true)}</div>
        <div class="vsep"></div>
        ${this.big(icons.switchWin, "切换窗口", "", true)}
      </div><div class="label">窗口</div></div>
      <div class="group g5"><div class="row">${this.big(icons.macro, "宏", "w50", true)}</div><div class="label">宏</div></div>
      <button class="fold" aria-label="折叠功能区">${icons.up}</button>`;
  }
}

/* ---------- status bar ---------- */
@customElement("status-bar")
class StatusBar extends LitElement {
  static styles = css`
    :host { display: flex; align-items: center; height: 19px; flex: none; border-top: 1px solid #bdbdbd; background: #f0f0f0; font: 12px/18px ${UI_FONT}; color: #444; padding-left: 6px; }
    button { font: inherit; color: inherit; border: 0; padding: 0; background: none; white-space: nowrap; text-align: left; }
    svg { display: block; }
    .info { display: grid; grid-template-columns: 54px 42px 116px 75px 75px 73px 42px auto; justify-content: start; flex: 1; align-items: center; }
    .view { width: 38px; height: 19px; display: grid; place-items: center; }
    .on { background: #c6c6c6; }
    .zoom { display: flex; align-items: center; margin: 0 17px 0 2px; }
    .sign { width: 12px; text-align: center; font-weight: 700; font-size: 16px; }
    input { appearance: none; width: 104px; height: 13px; margin: 0; background: linear-gradient(#888, #888) 50% 50% / 1px 5px no-repeat, linear-gradient(#999, #999) 0 50% / 100% 1px no-repeat; }
    input::-webkit-slider-thumb { appearance: none; width: 4px; height: 12px; background: #555; }
    .pct { margin-left: 13px; }
  `;
  render() {
    return html`
      <div class="info">${["页面: 4", "节: 3", "第 4 页，共 13 页", "3177 个字", "中文(中国)", "修订: 关闭", "插入"].map((t) => html`<button>${t}</button>`)}<button aria-label="录制宏">${icons.macroRec}</button></div>
      <button class="view" aria-label="阅读视图">${icons.viewRead}</button><button class="view on" aria-label="页面视图">${icons.viewPrint}</button><button class="view" aria-label="Web 版式视图">${icons.viewWeb}</button>
      <div class="zoom"><button class="sign" aria-label="缩小">−</button><input type="range" min="0" max="100" value="27" aria-label="显示比例"><button class="sign" aria-label="放大">+</button><button class="pct">60%</button></div>`;
  }
}

const arrow = (d: string, x: number, y: number, x2: number, y2: number) =>
  svg`<path d="M${x} ${y}L${x2} ${y2}" stroke="#d9131a" stroke-width="3.500" stroke-linecap="round"/><path d=${d} fill="#f80606"/>`;

@customElement("app-root")
class AppRoot extends LitElement {
  static styles = css`
    :host { display: flex; flex-direction: column; height: 100vh; position: relative; overflow: hidden; background: #e6e6e6; font: 12px/16px ${UI_FONT}; color: #444; }
    button { font: inherit; color: inherit; border: 0; padding: 0; background: none; white-space: nowrap; }
    svg { display: block; }
    .title { display: grid; grid-template-columns: 1fr auto 1fr; align-items: center; height: 34px; background: #2b579a; color: #fff; font-size: 13px; }
    .title span { grid-column: 2; }
    .win { display: flex; justify-content: flex-end; gap: 6px; }
    .win button { width: 40px; height: 32px; display: grid; place-items: center; }
    .tabs { display: flex; align-items: stretch; height: 26px; gap: 2px; background: #2b579a; color: #fff; }
    .tab { padding: 0 14px 2px 13px; }
    .tab:first-child { padding: 0 20px 2px 16px; }
    .active { background: #f0f0f0; color: #2b579a; }
    .tell { display: flex; align-items: center; gap: 5px; color: #a4bbe0; padding-left: 13px; flex: 1; }
    .share { display: flex; align-items: center; gap: 4px; width: 66px; padding: 0 0 2px 6px; margin-bottom: 1px; background: #124078; box-sizing: border-box; }
    .login { padding: 0 8px 2px 0; }
    .quick { display: flex; align-items: center; height: 33px; padding: 0 0 2px 13px; gap: 35px; }
    .quick button { width: 18px; display: grid; place-items: center; }
    .undo { display: flex; align-items: center; gap: 5px; width: 18px; }
    .quick .undo button { flex: none; }
    .quick .undo button:last-child { width: 7px; }
    main { flex: 1; min-height: 0; display: flex; }
    .canvas { flex: 1; min-width: 0; display: grid; grid-template-columns: 479px 479px; column-gap: 10px; row-gap: 8px; justify-content: center; grid-template-rows: 22px 58px 678px 1fr; overflow: hidden; }
    h-ruler { grid-column: 2; }
    .float { position: absolute; left: 171px; top: 517px; }
    .scroll { width: 16px; display: flex; flex-direction: column; align-items: flex-end; padding: 2px 0; box-sizing: border-box; }
    .scroll button { width: 13px; height: 15px; border: 1px solid #c8c8c8; box-sizing: border-box; display: grid; place-items: center; background: #f0f0f0; flex: none; }
    .track { flex: 1; padding-top: 104px; }
    .bar { width: 13px; height: 130px; box-sizing: border-box; background: #f3f3f3; border: 1px solid #c8c8c8; }
    .overlay { position: absolute; left: 0; top: 0; pointer-events: none; overflow: visible; }
    .shadow { filter: drop-shadow(3px 3px 2px #0006); }
    .brand { position: absolute; right: 10px; bottom: 4px; display: flex; align-items: center; gap: 3px; opacity: .8; pointer-events: none; }
    .words { display: flex; flex-direction: column; align-items: center; }
    .cn { font-size: 21px; line-height: 25px; font-weight: 500; color: #4b97db; }
    .url { font: 17px/18px "Liberation Sans", sans-serif; color: #43b95b; }
  `;
  render() {
    const quick = [icons.redo, icons.pages2, icons.link, icons.preview, icons.attach, icons.swap];
    const names = ["重复", "多页", "超链接", "打印预览", "附件", "切换"];
    return html`
      <div class="title"><span>Word教程2.docx - Word</span>
        <div class="win"><button aria-label="功能区显示选项">${icons.rib}</button><button aria-label="最小化">${icons.min}</button><button aria-label="最大化">${icons.max}</button><button aria-label="关闭">${icons.close}</button></div>
      </div>
      <div class="tabs">
        ${TABS.map((t) => html`<button class=${classMap({ tab: true, active: t === "视图" })}>${t}</button>`)}
        <button class="tell">${icons.bulb}<span>告诉我您想要做什么...</span></button>
        <button class="login">登录</button><button class="share">${icons.user}<span>共享</span></button>
      </div>
      <ribbon-bar></ribbon-bar>
      <div class="quick">
        <button aria-label="保存">${icons.save}</button>
        <div class="undo"><button aria-label="撤消">${icons.undo}</button><button aria-label="撤消选项">${icon(6, 4, svg`<path d="M0 0h6L3 3.500z" fill="#666"/>`)}</button></div>
        ${quick.map((q, i) => html`<button aria-label=${names[i]}>${q}</button>`)}
      </div>
      <main>
        <nav-pane></nav-pane>
        <v-ruler></v-ruler>
        <div class="canvas">
          <h-ruler></h-ruler>
          <doc-sheet extent="foot" no="1"></doc-sheet><doc-sheet extent="foot" no="2"></doc-sheet>
          <doc-sheet extent="full" no="3"></doc-sheet>
          <doc-sheet extent="full" no="4" placeholder><paste-menu class="float"></paste-menu></doc-sheet>
          <doc-sheet extent="head"></doc-sheet><doc-sheet extent="head"></doc-sheet>
        </div>
        <div class="scroll"><button aria-label="向上">${icon(7, 4, svg`<path d="M0 4h7L3.500 0z" fill="#aaa"/>`)}</button><div class="track"><div class="bar"></div></div><button aria-label="向下">${icon(7, 4, svg`<path d="M0 0h7L3.500 4z" fill="#aaa"/>`)}</button></div>
      </main>
      <status-bar></status-bar>
      <svg class="overlay" width="10" height="10" fill="none" aria-hidden="true">
        <g class="shadow">
          ${arrow("M783 332l6-27 4 3 9 3z", 861, 184, 793, 311)}
          ${arrow("M1300 327l6-27 4 3 9 3z", 1393, 150, 1310, 306)}
          ${arrow("M1194 810l24-11-2 6 5 9z", 1276, 793, 1216, 806)}
          ${arrow("M1161 884l-1 27 6-3 10-2z", 1191, 977, 1168, 906)}
        </g>
        <path d="M1276.500 862.500v15l3.500-3 3 6 3-1.500-3-5.500h5z" fill="#fff" stroke="#111"/>
      </svg>
      <div class="brand" aria-hidden="true">
        ${icon(78, 50, svg`
          <path d="M14 2l18 0 8 11L66 0 42 22l5 10H38l-4-7L2 40l26-22z" fill="#fff" opacity=".6"/>
          <path d="M76 5C52 4 37 17 37 29c0 6 5 9 12 8-5-12 6-27 27-32z" fill="#3f98d8"/>
          <path d="M49 28c-1-9 8-14 15-12 6 2 4 9-1 12-3 2-7 2-8 0 4 1 7-2 6-5-2-3-8-1-12 5z" fill="#3d8fd0"/>
          <path d="M66 14c12 2 12 16 1 23-10 7-22 8-27 9-3-2-4-5-3-8 12 3 33-2 29-24z" fill="#5bb85a"/>
          <path d="M37 38c8 3 18 1 25-3-5 8-13 12-21 12-3-2-4-5-4-9z" fill="#d9c23c"/>`)}
        <div class="words"><span class="cn">极光下载站</span><span class="url">www.xz7.com</span></div>
      </div>`;
  }
}
